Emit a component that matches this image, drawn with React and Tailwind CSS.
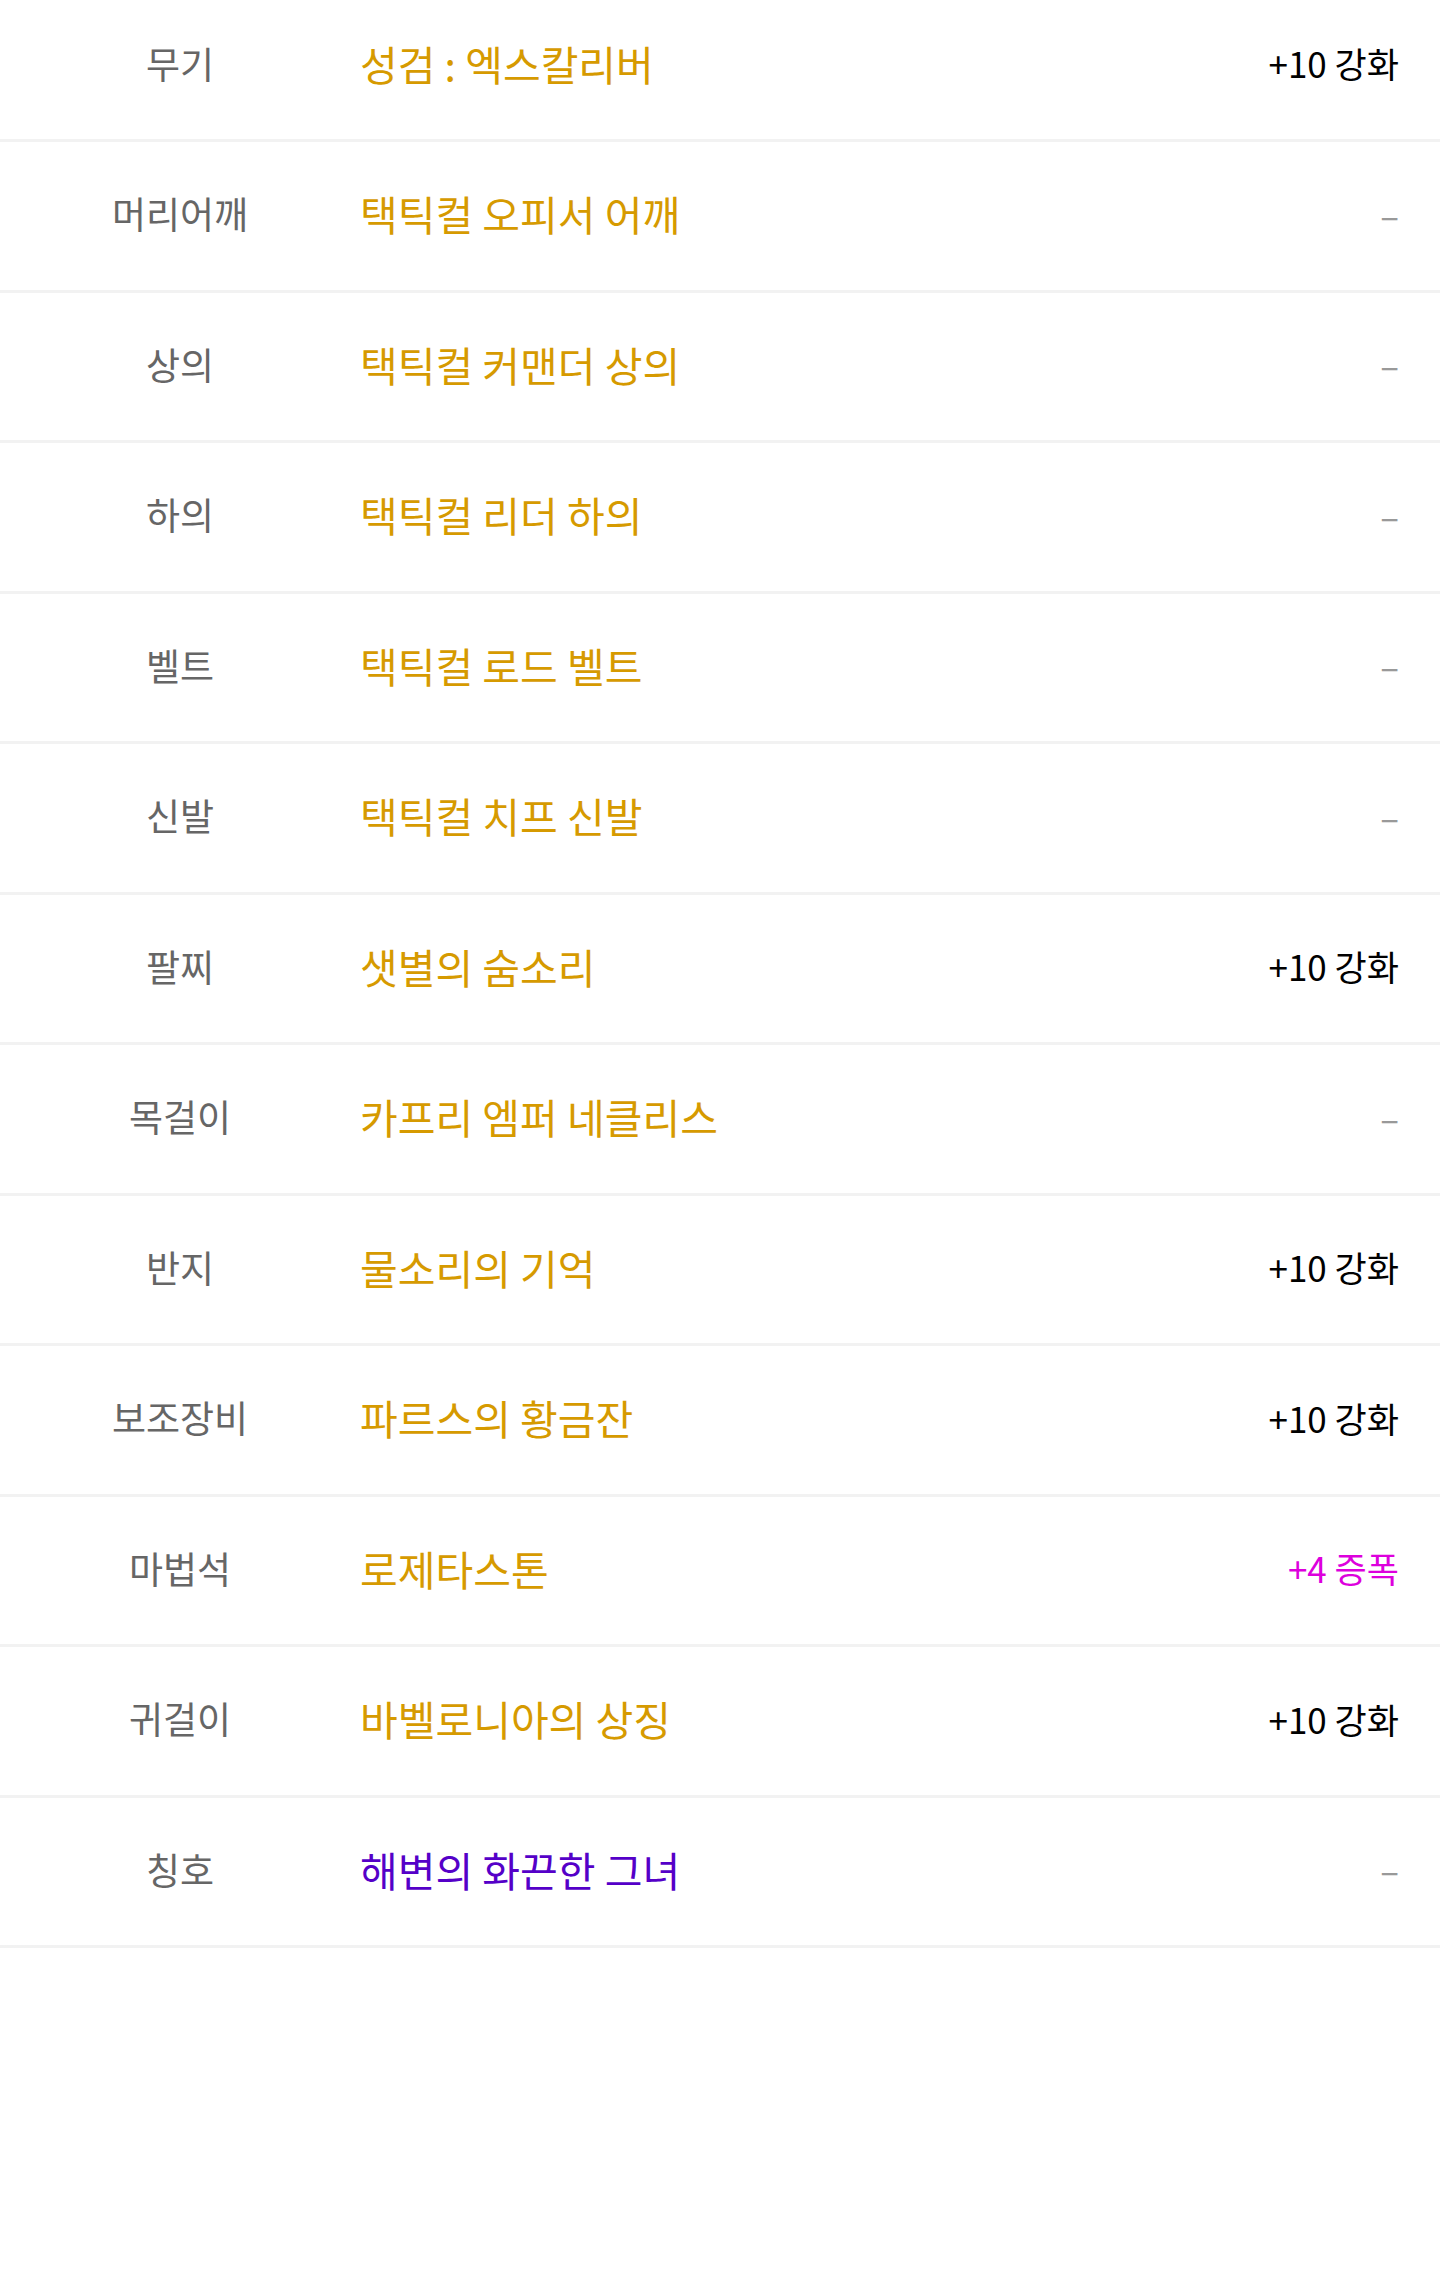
const items = [
  { slot: "무기", name: "성검 : 엑스칼리버", extra: "+10 강화", kind: "enhance" },
  { slot: "머리어깨", name: "택틱컬 오피서 어깨" },
  { slot: "상의", name: "택틱컬 커맨더 상의" },
  { slot: "하의", name: "택틱컬 리더 하의" },
  { slot: "벨트", name: "택틱컬 로드 벨트" },
  { slot: "신발", name: "택틱컬 치프 신발" },
  { slot: "팔찌", name: "샛별의 숨소리", extra: "+10 강화", kind: "enhance" },
  { slot: "목걸이", name: "카프리 엠퍼 네클리스" },
  { slot: "반지", name: "물소리의 기억", extra: "+10 강화", kind: "enhance" },
  { slot: "보조장비", name: "파르스의 황금잔", extra: "+10 강화", kind: "enhance" },
  { slot: "마법석", name: "로제타스톤", extra: "+4 증폭", kind: "amplify" },
  { slot: "귀걸이", name: "바벨로니아의 상징", extra: "+10 강화", kind: "enhance" },
  { slot: "칭호", name: "해변의 화끈한 그녀", extra: null, title: true },
];

function EquipRow({ item }) {
  return (
    <div className="flex items-center h-[150.5px] pb-[4px] border-b-[3px] border-[#f2f2f2] bg-white">
      {/* slot */}
      <div className="w-[360px] shrink-0 text-center text-[37px] text-[#666666]">
        {item.slot}
      </div>

      {/* item name */}
      <div
        className={
          item.title
            ? "flex-1 text-[41px] text-[#5500c8]"
            : "flex-1 text-[41px] text-[#d69a00]"
        }
      >
        {item.name}
      </div>

      {/* enhance / amplify */}
      <div className="pr-[41px] text-right">
        {item.kind === "enhance" && (
          <span className="text-[35px] text-black">{item.extra}</span>
        )}
        {item.kind === "amplify" && (
          <span className="text-[35px] text-[#dd00dd]">{item.extra}</span>
        )}
        {!item.kind && (
          <span className="text-[35px] text-[#999999]">–</span>
        )}
      </div>
    </div>
  );
}

export default function App() {
  return (
    <div className="min-h-[2279px] bg-white overflow-hidden font-['Noto_Sans_CJK_KR','Noto_Sans',sans-serif]">
      <div className="-mt-[8.5px]">
        {items.map((item) => (
          <EquipRow key={item.slot} item={item} />
        ))}
      </div>
    </div>
  );
}
